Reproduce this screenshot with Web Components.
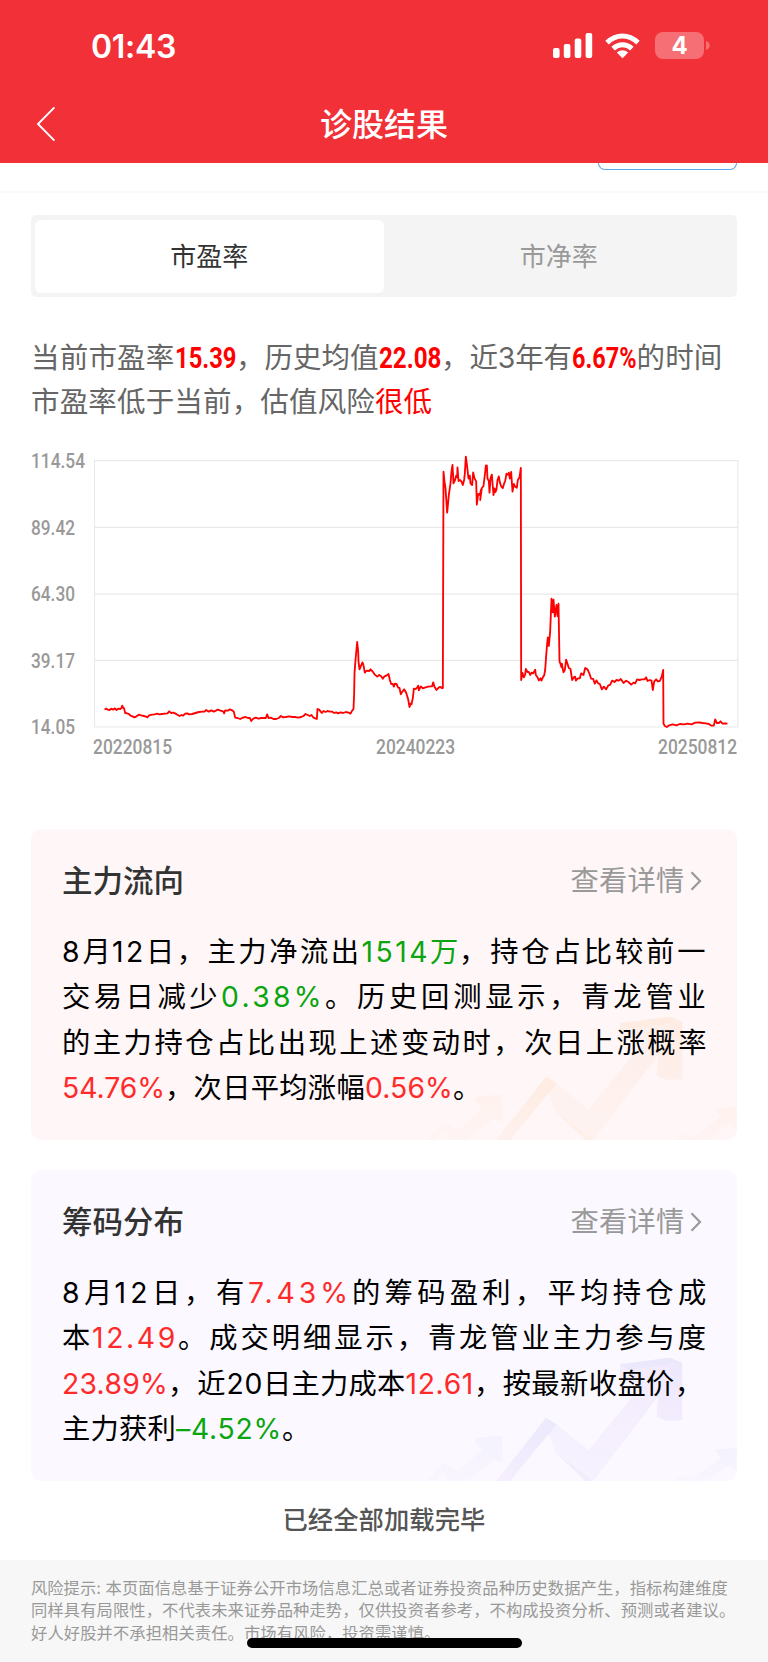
<!DOCTYPE html>
<html lang="zh-CN">
<head>
<meta charset="utf-8">
<title>诊股结果</title>
<style>
html,body{margin:0;padding:0;background:#fff}
body{width:768px;height:1662px;overflow:hidden;font-family:Inter,"Noto Sans CJK SC",sans-serif}
</style>
</head>
<body>
<stock-page></stock-page>
<script>
const define=(name,html,init)=>customElements.define(name,class extends HTMLElement{
  connectedCallback(){
    if(this.shadowRoot)return;
    const root=this.attachShadow({mode:'open'});
    const t=document.createElement('template');
    t.innerHTML=html;
    root.append(t.content.cloneNode(true));
    if(init)init.call(this,root);
  }
});

/* A run of text set to an exact advance width, by tracking or by condensing. */
define('text-run',`<style>
:host{display:block;flex:none;white-space:pre}
:host([tone=red]){color:#ff2a2a}
:host([tone=pure]){color:#f00}
:host([tone=green]){color:#0aa50f}
:host([cond]){font-family:Roboto,sans-serif}
:host([cond=bold]){font-weight:700;font-size:29px}
span{display:inline-block;transform-origin:0 50%}
</style><span><slot></slot></span>`,function(root){
  const w=+this.getAttribute('w'),s=root.querySelector('span');
  this.style.width=w+'px';
  const n=s.getBoundingClientRect().width;
  if(this.hasAttribute('cond'))s.style.transform='scaleX('+w/n+')';
  else s.style.letterSpacing=(w-n)/[...this.textContent].length+'px';
});

define('text-line',`<style>
:host{display:flex;align-items:baseline;height:var(--lh);line-height:var(--lh)}
</style><slot></slot>`);

define('status-bar',`<style>
:host{display:flex;align-items:center;height:91px;padding:0 58px 0 91px;box-sizing:border-box;color:#fff;font-weight:600}
.time{font-size:32px;line-height:40px;flex:1;padding-top:2px}
.sig{margin-right:12px}.wifi{margin-right:15px}
.bat{width:49px;height:27px;border-radius:8px;background:#f66f74;font-size:24px;line-height:27px;text-align:center;font-weight:700}
.nub{margin-left:2px}
</style>
<div class="time"><text-run w="85">01:43</text-run></div>
<svg class="sig" width="40" height="26" viewBox="0 0 40 26" fill="#fff"><rect x="0" y="15" width="6.6" height="10" rx="2"/><rect x="10.8" y="11" width="6.6" height="14" rx="2"/><rect x="21.7" y="5.5" width="6.6" height="19.5" rx="2"/><rect x="32.6" y="0" width="6.6" height="25" rx="2"/></svg>
<svg class="wifi" width="35" height="26" viewBox="0 0 35 26"><g fill="none" stroke="#fff" stroke-width="5"><path d="M2 9.6Q9.2 3 17.5 3T33 9.6"/><path d="M8.1 15.6Q12.2 11.7 17.5 11.7T26.9 15.6"/></g><path d="M11.8 19.5Q17.5 15.1 23.2 19.5L17.5 25.2Z" fill="#fff"/></svg>
<div class="bat">4</div>
<svg class="nub" width="4" height="9" viewBox="0 0 4 9"><path d="M0 0Q3.7 1.2 3.7 4.5T0 9Z" fill="#f66f74"/></svg>`);

define('nav-bar',`<style>
:host{display:grid;grid-template-columns:60px 1fr 60px;align-items:center;height:66px;color:#fff}
svg{margin-left:36px}
.t{justify-self:center;font-size:32px;line-height:48px;font-weight:500;padding-top:1px}
</style><svg width="20" height="36" viewBox="0 0 20 36" fill="none" stroke="#fff" stroke-width="1.9"><path d="M18.4 1.3 2 18 18.4 34.7"/></svg>
<div class="t"><text-run w="128"><slot></slot></text-run></div>`,function(root){
  root.querySelector('text-run').textContent=this.textContent;
});

define('app-header',`<style>
:host{display:block;height:163px;background:#f23038}
</style><status-bar></status-bar><nav-bar>诊股结果</nav-bar>`);

define('clipped-button',`<style>
:host{display:flex;justify-content:flex-end;height:28px;padding-right:31px;border-bottom:2px solid #f9f9f9}
div{box-sizing:border-box;width:139px;height:7px;border:1.5px solid #5ba8ef;border-top:0;border-radius:0 0 7px 7px}
</style><div></div>`);

define('segment-tabs',`<style>
:host{display:grid;grid-template-columns:1fr 1fr;margin:22px 31px 0;height:82px;box-sizing:border-box;padding:4.5px 3.5px;background:#f4f4f4;border-radius:5px;font-size:26px}
div{box-sizing:border-box;display:flex;align-items:center;justify-content:center;padding-bottom:4px;border-radius:6px;color:#999}
.on{background:#fff;color:#333}
</style><div class="on"><text-run w="78">市盈率</text-run></div><div><text-run w="78">市净率</text-run></div>`);

define('valuation-summary',`<style>
:host{display:block;margin:39px 31px 0;--lh:44px;font-size:28.5px;color:#666}
</style>
<text-line><text-run w="143.5">当前市盈率</text-run><text-run w="61.5" cond="bold" tone="pure">15.39</text-run><text-run w="142.5">，历史均值</text-run><text-run w="62.5" cond="bold" tone="pure">22.08</text-run><text-run w="131">，近3年有</text-run><text-run w="64.5" cond="bold" tone="pure">6.67%</text-run><text-run w="86">的时间</text-run></text-line>
<text-line><text-run w="344">市盈率低于当前，估值风险</text-run><text-run w="57" tone="pure">很低</text-run></text-line>`);

define('pe-chart',`<style>
:host{display:block;margin:27px 31px 0;color:#999;font:500 20px/20px Roboto,sans-serif}
.plot{display:grid;grid-template-columns:62.5px 645px;height:286px}
.y{display:flex;flex-direction:column;justify-content:space-between}
.x{display:flex;justify-content:space-between;padding-left:62px}
</style>
<div class="plot"><div class="y"><text-run cond w="54">114.54</text-run><text-run cond w="44">89.42</text-run><text-run cond w="44">64.30</text-run><text-run cond w="44">39.17</text-run><text-run cond w="44">14.05</text-run></div>
<svg width="645" height="286" viewBox="280.5 33 1935 858"><g fill="none" stroke="#e9e9e9" stroke-width="3.500"><path d="M282 62H2212V861H282ZM282 262H2212M282 462.500H2212M282 661H2212"/></g>
<path fill="none" stroke="#f00" stroke-width="5.500" stroke-linejoin="round" d="M312 808L318 806 322 809 327 810 332 806 338 809 343 805 348 810 353 806 359 807 363 804 365 797 369 804 371 806 374 819 380 820 385 822 390 827 396 829 402 832 408 829 415 824 422 826 430 828 437 830 440 832 446 826 455 824 462 823 470 821 477 823 485 822 493 821 501 820 506 814 512 819 519 818 525 821 532 825 537 828 543 825 548 827 554 821 560 820 566 823 575 822 585 819 595 816 606 815 612 815 617 810 625 815 632 811 640 815 652 809 660 812 668 814 671 820 674 811 682 812 688 808 695 811 700 815 704 833 711 834 719 837 727 833 735 831 742 834 748 834 752 843 757 837 765 833 774 836 782 834 790 834 796 834 800 823 804 834 811 833 819 837 827 837 835 834 841 828 848 832 856 831 866 829 876 831 884 831 893 833 902 831 909 828 915 822 922 825 928 828 933 825 938 832 944 835 949 837 951 807 956 809 960 814 964 819 969 813 975 816 981 813 988 815 995 815 1001 819 1007 817 1013 820 1020 817 1028 819 1036 816 1044 818 1050 821 1055 812 1059 807 1061 760 1062 700 1065 660 1070 606 1073 635 1074 664 1077 688 1082 676 1086 667 1089 676 1093 698 1097 693 1102 692 1107 693 1110 688 1115 693 1119 698 1123 704 1130 710 1136 705 1142 709 1147 716 1151 710 1157 707 1164 702 1168 719 1172 732 1177 732 1180 740 1183 731 1188 732 1193 743 1197 744 1201 763 1206 754 1211 748 1217 758 1223 778 1227 801 1230 791 1233 793 1237 774 1240 746 1246 747 1251 741 1253 737 1255 751 1261 739 1267 745 1275 742 1283 740 1290 739 1295 739 1298 727 1302 740 1308 750 1315 742 1320 741 1324 744 1327 744 1329 95 1332 125 1335 145 1340 218 1345 165 1350 130 1353 94 1356 75 1359 130 1363 122 1367 107 1370 112 1371 82 1374 123 1379 120 1383 125 1387 135 1391 119 1393 100 1396 50 1400 80 1404 116 1408 107 1410 130 1415 135 1418 97 1422 115 1427 124 1429 194 1433 162 1438 165 1442 148 1439 180 1444 144 1449 138 1454 96 1456 77 1459 76 1461 116 1465 123 1467 158 1470 115 1474 104 1479 165 1482 145 1485 156 1488 148 1491 120 1495 109 1498 127 1502 139 1507 144 1511 130 1514 123 1518 101 1522 104 1525 98 1528 116 1532 96 1536 155 1540 132 1544 140 1549 143 1552 120 1557 112 1561 84 1562 720 1566 699 1570 712 1574 704 1576 687 1581 696 1585 696 1589 705 1593 698 1598 700 1604 689 1606 705 1611 712 1615 721 1620 715 1623 722 1628 710 1631 706 1634 690 1637 647 1640 610 1642 592 1645 618 1649 574 1653 476 1657 517 1659 479 1663 530 1668 495 1671 528 1674 491 1677 664 1680 672 1683 682 1684 671 1689 697 1693 690 1697 659 1701 671 1705 684 1710 687 1715 720 1720 712 1724 710 1726 722 1732 715 1738 715 1742 700 1749 705 1754 684 1761 688 1767 701 1772 716 1778 717 1783 731 1788 721 1793 730 1798 732 1804 748 1810 740 1817 748 1823 737 1829 734 1835 722 1842 726 1848 720 1855 722 1861 717 1869 729 1877 722 1885 727 1892 734 1899 728 1904 730 1910 718 1917 720 1924 718 1932 718 1937 712 1941 723 1948 720 1953 722 1957 750 1961 725 1967 718 1972 724 1978 723 1984 709 1988 690 1989 851 1993 858 1999 861 2006 856 2016 853 2028 856 2038 852 2050 853 2061 851 2073 853 2084 848 2096 847 2106 849 2116 850 2125 852 2133 857 2140 857 2144 838 2149 849 2155 849 2160 844 2166 851 2173 850 2181 851"/></svg></div>
<div class="x"><text-run cond w="79">20220815</text-run><text-run cond w="79">20240223</text-run><text-run cond w="79">20250812</text-run></div>`);

/* Rising-arrow watermark; its two colours come from the card. */
define('trend-art',`<style>
:host{display:block;width:357px;height:310px}
svg{display:block}
</style><svg width="357" height="310" viewBox="0 27 1071 931">
<defs>
<linearGradient id="a" x1="0" y1="1" x2="1" y2="0"><stop offset="0" stop-color="var(--art2)" stop-opacity=".3"/><stop offset="1" stop-color="var(--art2)"/></linearGradient>
<linearGradient id="f" x1="1" y1="0" x2="0" y2="1"><stop offset="0" stop-color="var(--art1)"/><stop offset="1" stop-color="var(--art2)" stop-opacity=".7"/></linearGradient>
<linearGradient id="b" x1="0" y1="0" x2="0" y2="1"><stop offset="0" stop-color="var(--art1)"/><stop offset="1" stop-color="var(--art2)" stop-opacity=".6"/></linearGradient></defs>
<path fill="url(#a)" d="M498 768 530 788 625 866 785 672 720 650V607L870 588 907 603V775L862 778 830 765 835 704 640 958H620L525 872 505 815 390 958H348Z"/>
<path fill="url(#f)" opacity=".75" d="M498 768 530 788 390 958H348Z"/>
<path fill="var(--art1)" opacity=".4" d="M525 872 625 945 635 958H615Z"/>
<path fill="var(--art1)" opacity=".6" d="M720 607 870 588 907 603 745 625Z"/>
<path fill="url(#b)" opacity=".5" d="M870 612 907 603V775L862 778 830 765 835 704 870 660Z"/>
<g fill="url(#b)" opacity=".38"><path d="M140 958 190 905 235 928 306 866 285 842 290 828 366 821 369 905 340 895 262 958H210L190 930 165 958Z"/>
<path d="M884 958 905 939 935 950 1022 890 1005 865 1071 858V928L1050 910 982 958Z"/></g></svg>`);

define('insight-card',`<style>
:host{display:block;position:relative;box-sizing:border-box;width:706px;height:311px;margin:0 31px;padding:30px 31px 0;border-radius:10px;background:var(--bg);overflow:hidden;font-size:28.3px;color:#000;--lh:45.5px}
trend-art{position:absolute;right:0;bottom:0}
.head,.body{position:relative}
.head{display:flex;align-items:center;height:44px;line-height:44px}
.t{font-size:30.5px;font-weight:500;color:#333;flex:1}
.more{color:#999}
svg{margin:0 4.500px 0 5px}
.body{margin-top:26.500px}
</style><trend-art></trend-art>
<div class="head"><div class="t"><text-run w="122"></text-run></div><div class="more"><text-run w="114">查看详情</text-run></div><svg width="12" height="20" viewBox="0 0 12 20" fill="none" stroke="#999" stroke-width="2.200"><path d="M1.500 1.200 10 10 1.500 18.800"/></svg></div>
<div class="body"><slot></slot></div>`,function(root){
  const run=document.createElement('text-run');
  run.setAttribute('w','122');
  run.textContent=this.getAttribute('heading');
  root.querySelector('.t').replaceChildren(run);
});

define('risk-footer',`<style>
:host{display:block;box-sizing:border-box;height:110px;margin-top:25px;padding:16.500px 31px 0;background:#f7f7f7;color:#999;font-size:16.300px;--lh:22.700px}
</style>
<text-line><text-run w="74.500">风险提示: </text-run><text-run w="622.500">本页面信息基于证券公开市场信息汇总或者证券投资品种历史数据产生，指标构建维度</text-run></text-line>
<text-line><text-run w="704.300">同样具有局限性，不代表未来证券品种走势，仅供投资者参考，不构成投资分析、预测或者建议。</text-run></text-line>
<text-line><text-run w="409.500">好人好股并不承担相关责任。市场有风险，投资需谨慎。</text-run></text-line>`);

define('stock-page',`<style>
:host{display:block;position:relative;width:768px;height:1662px;background:#fff;overflow:hidden}
.c1{margin-top:72px;--bg:#fff6f7;--art1:#ffeadc;--art2:#fdeee9}
.c2{margin-top:30px;--bg:#fbf9ff;--art1:#e6e6fb;--art2:#f2eafd}
.done{display:flex;justify-content:center;height:30px;line-height:30px;margin-top:24px;font-size:25.300px;font-weight:500;color:#555}
.home{position:absolute;left:247px;top:1638px;width:274.500px;height:9.500px;border-radius:5px;background:#000}
</style>
<app-header></app-header><clipped-button></clipped-button><segment-tabs></segment-tabs>
<valuation-summary></valuation-summary><pe-chart></pe-chart>
<insight-card class="c1" heading="主力流向">
<text-line><text-run w="20.500">8</text-run><text-run w="29.500">月</text-run><text-run w="34">12</text-run><text-run w="215.500">日，主力净流出</text-run><text-run w="68.500" tone="green">1514</text-run><text-run w="29" tone="green">万</text-run><text-run w="249.500">，持仓占比较前一</text-run></text-line>
<text-line><text-run w="159">交易日减少</text-run><text-run w="104" tone="green">0.38%</text-run><text-run w="384.500">。历史回测显示，青龙管业</text-run></text-line>
<text-line><text-run w="647">的主力持仓占比出现上述变动时，次日上涨概率</text-run></text-line>
<text-line><text-run w="103" tone="red">54.76%</text-run><text-run w="200">，次日平均涨幅</text-run><text-run w="88" tone="red">0.56%</text-run><text-run w="28.500">。</text-run></text-line>
</insight-card>
<insight-card class="c2" heading="筹码分布">
<text-line><text-run w="22">8</text-run><text-run w="30.500">月</text-run><text-run w="37.500">12</text-run><text-run w="96">日，有</text-run><text-run w="104" tone="red">7.43%</text-run><text-run w="358.500">的筹码盈利，平均持仓成</text-run></text-line>
<text-line><text-run w="30">本</text-run><text-run w="86" tone="red">12.49</text-run><text-run w="531">。成交明细显示，青龙管业主力参与度</text-run></text-line>
<text-line><text-run w="106" tone="red">23.89%</text-run><text-run w="58.500">，近</text-run><text-run w="36.500">20</text-run><text-run w="142.500">日主力成本</text-run><text-run w="68.500" tone="red">12.61</text-run><text-run w="229.500">，按最新收盘价，</text-run></text-line>
<text-line><text-run w="114">主力获利</text-run><text-run w="106" tone="green">–4.52%</text-run><text-run w="28.500">。</text-run></text-line>
</insight-card>
<div class="done"><text-run w="203">已经全部加载完毕</text-run></div>
<risk-footer></risk-footer>
<div class="home"></div>`);
</script>
</body>
</html>
